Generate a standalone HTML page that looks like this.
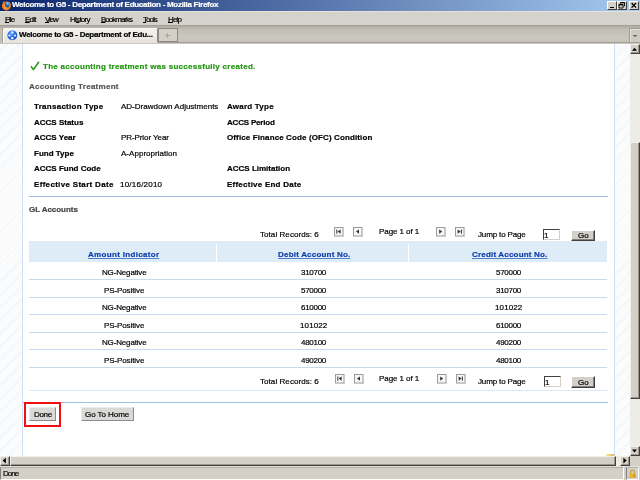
<!DOCTYPE html>
<html><head><meta charset="utf-8">
<style>
*{margin:0;padding:0;box-sizing:border-box}
html,body{width:640px;height:480px;overflow:hidden;background:#d4d0c8;font-family:"Liberation Sans",sans-serif}
.a{position:absolute}
.t{position:absolute;white-space:nowrap;line-height:10px;font-size:8px;color:#000;will-change:transform;-webkit-text-stroke:0.2px currentColor}
.b{font-weight:bold}
.u{text-decoration:underline;text-decoration-color:#5080cc;text-decoration-thickness:1px;text-underline-offset:1px}
.hatch{background:repeating-linear-gradient(-45deg,#ffffff 0px,#ffffff 1.3px,#f3f6f8 1.3px,#f3f6f8 2.3px)}
.wbtn{position:absolute;top:1px;width:10px;height:9px;background:#d4d0c8;border:1px solid;border-color:#fff #404040 #404040 #fff}
.pbtn{position:absolute;width:9px;height:9px;border:1px solid #b0b0b0;background:#f4f4f4}
.line{position:absolute;height:1px}
.sbtn{position:absolute;background:#d4d0c8;border:1px solid;border-color:#f2f0ea #404040 #404040 #f2f0ea;box-shadow:inset -1px -1px 0 #9a968e}
.gbtn{position:absolute;background:#d4d0c8;border:1px solid;border-color:#fff #404040 #404040 #fff;box-shadow:inset -1px -1px 0 #808080}

u{text-decoration:underline;text-decoration-thickness:1px;text-underline-offset:0px}

</style></head><body>
<!-- Title bar -->
<div class="a" style="left:0;top:0;width:640px;height:11px;background:linear-gradient(to right,#0a246a 0%,#a6caf0 100%)"></div>
<svg class="a" style="left:1px;top:0px" width="11" height="11" viewBox="0 0 11 11">
<defs><radialGradient id="fx" cx="0.45" cy="0.6" r="0.6"><stop offset="0" stop-color="#ffb030"/><stop offset="0.65" stop-color="#f07818"/><stop offset="1" stop-color="#c04a10"/></radialGradient>
<radialGradient id="gl" cx="0.55" cy="0.25" r="0.8"><stop offset="0" stop-color="#8ad8ff"/><stop offset="0.5" stop-color="#2a70c8"/><stop offset="1" stop-color="#143a88"/></radialGradient></defs>
<circle cx="5.4" cy="5.8" r="4.6" fill="url(#fx)"/>
<ellipse cx="6.4" cy="4.6" rx="2.4" ry="2.9" fill="url(#gl)"/>
<path d="M8.6 2.6 Q9.6 4.6 8.6 7" stroke="#f5a030" stroke-width="0.9" fill="none"/>
<path d="M1.6 1.2 L2.6 3.6 L4.4 2.4 Z" fill="#f08a20"/>
</svg>
<div class="wbtn" style="left:607px"></div>
<div class="wbtn" style="left:617px"></div>
<div class="wbtn" style="left:629px"></div>
<div class="a" style="left:610px;top:7px;width:4px;height:1px;background:#000"></div>
<svg class="a" style="left:617px;top:1px" width="10" height="9" viewBox="0 0 10 9"><path d="M3.5 1.5h4v3.5h-1M3.5 1.5v1.2M2 3.5h4v3.5h-4z M2 3.5v1" fill="none" stroke="#000" stroke-width="0.9"/><path d="M3.5 1.6h4" stroke="#000" stroke-width="1.3"/><path d="M2 3.7h4" stroke="#000" stroke-width="1.3"/></svg>
<svg class="a" style="left:629px;top:1px" width="10" height="9" viewBox="0 0 10 9"><path d="M2.6 2 L7 6.6 M7 2 L2.6 6.6" stroke="#000" stroke-width="1.3"/></svg>
<!-- Menu -->
<div class="a" style="left:0;top:11px;width:640px;height:15px;background:#d4d2ca;border-top:1px solid #e4e2dc"></div>
<!-- Tabs -->
<div class="a" style="left:0;top:25px;width:640px;height:19px;background:linear-gradient(#a29e96 0px,#a29e96 1px,#b4afa9 1px,#b8b2ac 3px,#c0bdb5 4px,#c4c1b9 8px,#c9c6be 10px,#c9c6be 16px,#c2bcb4 17px,#a29e98 17px,#a29e98 18px,#cac8c4 18px)"></div>
<div class="a" style="left:0;top:28px;width:3px;height:15px;background:#c4c0b8;border-right:1px solid #a8a49c"></div>
<div class="a" style="left:3px;top:28px;width:155px;height:15px;background:linear-gradient(#f4f3ef,#e6e3dc);border:1px solid;border-color:#fbfaf8 #8c8880 #e6e3dc #fbfaf8;border-radius:2px 2px 0 0"></div>
<svg class="a" style="left:7px;top:30px" width="11" height="11" viewBox="0 0 11 11">
<defs><radialGradient id="tb" cx="0.4" cy="0.35" r="0.7"><stop offset="0" stop-color="#5aa0ff"/><stop offset="0.7" stop-color="#1d5fe0"/><stop offset="1" stop-color="#0d3aa8"/></radialGradient></defs>
<circle cx="5.3" cy="5.3" r="4.9" fill="url(#tb)"/>
<circle cx="5.3" cy="2.4" r="1.2" fill="#f4f6ff"/><circle cx="2.5" cy="5.6" r="1.1" fill="#e8eeff"/><circle cx="8.1" cy="5.6" r="1.1" fill="#e8eeff"/><circle cx="5.3" cy="8.3" r="1.2" fill="#f4f6ff"/>
</svg>
<div class="a" style="left:158px;top:28px;width:20px;height:14px;border:1px solid #8c8880;background:#d4d0c8"></div>
<div class="a" style="left:165px;top:35px;width:5px;height:1px;background:#aaa69e"></div>
<div class="a" style="left:167px;top:33px;width:1px;height:5px;background:#aaa69e"></div>
<div class="a" style="left:629px;top:28px;width:11px;height:14px;border-left:1px solid #a09c94;border-top:1px solid #a09c94;background:#cdcac2;box-shadow:inset 1px 1px 0 #e4e2dc"></div>
<div class="a" style="left:633px;top:35px;width:4px;height:1px;background:#6a665e"></div>
<div class="a" style="left:634px;top:36px;width:2px;height:1px;background:#8a867e"></div>
<!-- Content -->
<div class="a" style="left:0;top:44px;width:630px;height:412px;background:#fff"></div>
<div class="a hatch" style="left:0;top:44px;width:22px;height:412px"></div>
<div class="a" style="left:22px;top:44px;width:1px;height:412px;background:#cfdff5"></div>
<div class="a hatch" style="left:615px;top:44px;width:15px;height:412px"></div>
<div class="a" style="left:614px;top:44px;width:1px;height:412px;background:#cfdff5"></div>
<svg class="a" style="left:30px;top:61px" width="10" height="10" viewBox="0 0 10 10"><path d="M1.3 5.8 L3.4 8.6 L8.6 1.2" fill="none" stroke="#1f9610" stroke-width="1.5" stroke-linecap="round" stroke-linejoin="round"/></svg>
<div class="line" style="left:29px;top:196px;width:579px;background:#9ec0e8"></div>
<!-- pager top -->
<svg class="a" style="left:334px;top:227px" width="10" height="10" viewBox="0 0 10 10"><rect x="0.5" y="0.5" width="8.5" height="8.5" fill="#f7f7f7" stroke="#9a9a9a" stroke-width="1"/><path d="M1 9.5 H9.5 V1" stroke="#c8c8c8" stroke-width="1" fill="none"/><rect x="2.3" y="2.5" width="1" height="4.2" fill="#333"/><path d="M6.6 2.4 L3.6 4.6 L6.6 6.8Z" fill="#333"/></svg><svg class="a" style="left:353px;top:227px" width="10" height="10" viewBox="0 0 10 10"><rect x="0.5" y="0.5" width="8.5" height="8.5" fill="#f7f7f7" stroke="#9a9a9a" stroke-width="1"/><path d="M1 9.5 H9.5 V1" stroke="#c8c8c8" stroke-width="1" fill="none"/><path d="M6 2.4 L3 4.6 L6 6.8Z" fill="#333"/></svg><svg class="a" style="left:436px;top:227px" width="10" height="10" viewBox="0 0 10 10"><rect x="0.5" y="0.5" width="8.5" height="8.5" fill="#f7f7f7" stroke="#9a9a9a" stroke-width="1"/><path d="M1 9.5 H9.5 V1" stroke="#c8c8c8" stroke-width="1" fill="none"/><path d="M3.2 2.4 L6.2 4.6 L3.2 6.8Z" fill="#333"/></svg><svg class="a" style="left:455px;top:227px" width="10" height="10" viewBox="0 0 10 10"><rect x="0.5" y="0.5" width="8.5" height="8.5" fill="#f7f7f7" stroke="#9a9a9a" stroke-width="1"/><path d="M1 9.5 H9.5 V1" stroke="#c8c8c8" stroke-width="1" fill="none"/><path d="M2.6 2.4 L5.6 4.6 L2.6 6.8Z" fill="#333"/><rect x="5.9" y="2.5" width="1" height="4.2" fill="#333"/></svg>
<div class="a" style="left:543px;top:229px;width:17px;height:11px;border:1px solid;border-color:#404040 #d4d0c8 #d4d0c8 #404040;background:#fff"></div>
<div class="gbtn" style="left:571px;top:230px;width:24px;height:11px"></div>
<!-- table -->
<div class="a" style="left:29px;top:241px;width:578px;height:21px;background:#deecf8"></div>
<div class="a" style="left:216px;top:244px;width:1px;height:18px;background:#fff"></div>
<div class="a" style="left:408px;top:244px;width:1px;height:18px;background:#fff"></div>
<div class="line" style="left:29px;top:279px;width:578px;background:#c9daf0"></div>
<div class="line" style="left:29px;top:297px;width:578px;background:#c9daf0"></div>
<div class="line" style="left:29px;top:314px;width:578px;background:#c9daf0"></div>
<div class="line" style="left:29px;top:332px;width:578px;background:#c9daf0"></div>
<div class="line" style="left:29px;top:349px;width:578px;background:#c9daf0"></div>
<div class="line" style="left:29px;top:367px;width:578px;background:#c9daf0"></div>
<!-- pager bottom -->
<svg class="a" style="left:335px;top:374px" width="10" height="10" viewBox="0 0 10 10"><rect x="0.5" y="0.5" width="8.5" height="8.5" fill="#f7f7f7" stroke="#9a9a9a" stroke-width="1"/><path d="M1 9.5 H9.5 V1" stroke="#c8c8c8" stroke-width="1" fill="none"/><rect x="2.3" y="2.5" width="1" height="4.2" fill="#333"/><path d="M6.6 2.4 L3.6 4.6 L6.6 6.8Z" fill="#333"/></svg><svg class="a" style="left:354px;top:374px" width="10" height="10" viewBox="0 0 10 10"><rect x="0.5" y="0.5" width="8.5" height="8.5" fill="#f7f7f7" stroke="#9a9a9a" stroke-width="1"/><path d="M1 9.5 H9.5 V1" stroke="#c8c8c8" stroke-width="1" fill="none"/><path d="M6 2.4 L3 4.6 L6 6.8Z" fill="#333"/></svg><svg class="a" style="left:437px;top:374px" width="10" height="10" viewBox="0 0 10 10"><rect x="0.5" y="0.5" width="8.5" height="8.5" fill="#f7f7f7" stroke="#9a9a9a" stroke-width="1"/><path d="M1 9.5 H9.5 V1" stroke="#c8c8c8" stroke-width="1" fill="none"/><path d="M3.2 2.4 L6.2 4.6 L3.2 6.8Z" fill="#333"/></svg><svg class="a" style="left:456px;top:374px" width="10" height="10" viewBox="0 0 10 10"><rect x="0.5" y="0.5" width="8.5" height="8.5" fill="#f7f7f7" stroke="#9a9a9a" stroke-width="1"/><path d="M1 9.5 H9.5 V1" stroke="#c8c8c8" stroke-width="1" fill="none"/><path d="M2.6 2.4 L5.6 4.6 L2.6 6.8Z" fill="#333"/><rect x="5.9" y="2.5" width="1" height="4.2" fill="#333"/></svg>
<div class="a" style="left:544px;top:376px;width:17px;height:11px;border:1px solid;border-color:#404040 #d4d0c8 #d4d0c8 #404040;background:#fff"></div>
<div class="gbtn" style="left:571px;top:376px;width:24px;height:12px"></div>
<div class="line" style="left:29px;top:390px;width:579px;background:#dde8f5"></div>
<div class="line" style="left:23px;top:402px;width:585px;background:#9ec0e8"></div>
<!-- buttons -->
<div class="a" style="left:29px;top:407px;width:27px;height:14px;background:#d9d9d7;border:1px solid;border-color:#ececec #8c8c8c #8c8c8c #ececec"></div>
<div class="a" style="left:81px;top:407px;width:53px;height:14px;background:#d9d9d7;border:1px solid;border-color:#ececec #8c8c8c #8c8c8c #ececec"></div>
<!-- vertical scrollbar -->
<div class="a" style="left:630px;top:44px;width:10px;height:412px;background:#edece7"></div>
<div class="sbtn" style="left:630px;top:44px;width:10px;height:10px"></div>
<svg class="a" style="left:630px;top:44px" width="10" height="10"><path d="M2 6.8 L4.5 3.8 L7 6.8Z" fill="#000"/></svg>
<div class="sbtn" style="left:630px;top:142px;width:10px;height:257px"></div>
<div class="sbtn" style="left:630px;top:446px;width:10px;height:10px"></div>
<svg class="a" style="left:630px;top:446px" width="10" height="10"><path d="M2 3.5 L4.5 6.5 L7 3.5Z" fill="#000"/></svg>
<!-- horizontal scrollbar -->
<div class="a" style="left:0;top:456px;width:640px;height:10px;background:#edece7"></div>
<div class="sbtn" style="left:0;top:456px;width:10px;height:10px"></div>
<svg class="a" style="left:0;top:456px" width="10" height="10"><path d="M5.9 1.8 L2.6 4.6 L5.9 7.4Z" fill="#000"/></svg>
<div class="sbtn" style="left:10px;top:456px;width:606px;height:10px"></div>
<div class="sbtn" style="left:620px;top:456px;width:10px;height:10px"></div>
<svg class="a" style="left:620px;top:456px" width="10" height="10"><path d="M3.4 1.8 L6.7 4.6 L3.4 7.4Z" fill="#000"/></svg>
<div class="a" style="left:630px;top:456px;width:10px;height:10px;background:#d4d0c8"></div>
<!-- status -->
<div class="a" style="left:0;top:466px;width:640px;height:14px;background:#d4d0c8;border-top:1px solid #e4e1da"></div>
<div class="a" style="left:0;top:467px;width:624px;height:13px;border:1px solid;border-color:#b4b0a8 #fff #fff #808080"></div>
<div class="a" style="left:626px;top:467px;width:13px;height:13px;border:1px solid;border-color:#b4b0a8 #fff #fff #808080"></div>
<svg class="a" style="left:627px;top:468px" width="11" height="11" viewBox="0 0 11 11"><path d="M3.6 5.6 V4.2 A1.9 1.9 0 0 1 7.4 4.2 V5.6" fill="none" stroke="#c89a20" stroke-width="1.1"/><rect x="2.2" y="5.4" width="6.8" height="4.6" rx="0.5" fill="#e2b830"/><rect x="6.6" y="6.4" width="1.2" height="2.6" fill="#b88a18"/></svg>
<div class="a" style="left:606px;top:454px;width:8px;height:2px;background:linear-gradient(to right,rgba(230,180,40,0.3),#e8b830)"></div>
<div id="t0" class="t b" style="left:43.00px;top:62px;letter-spacing:0.286px;color:#229610">The accounting treatment was successfully created.</div>
<div id="t1" class="t b" style="left:29.00px;top:82px;letter-spacing:0.263px;color:#555">Accounting Treatment</div>
<div id="t2" class="t b" style="left:33.50px;top:102px;letter-spacing:0.267px;">Transaction Type</div>
<div id="t3" class="t " style="left:121.00px;top:102px;">AD-Drawdown Adjustments</div>
<div id="t4" class="t b" style="left:227.00px;top:102px;letter-spacing:0.222px;">Award Type</div>
<div id="t5" class="t b" style="left:33.50px;top:118px;">ACCS Status</div>
<div id="t6" class="t b" style="left:227.00px;top:118px;letter-spacing:-0.200px;">ACCS Period</div>
<div id="t7" class="t b" style="left:33.50px;top:133px;">ACCS Year</div>
<div id="t8" class="t " style="left:121.00px;top:133px;letter-spacing:-0.083px;">PR-Prior Year</div>
<div id="t9" class="t b" style="left:227.00px;top:133px;letter-spacing:0.118px;">Office Finance Code (OFC) Condition</div>
<div id="t10" class="t b" style="left:33.50px;top:149px;">Fund Type</div>
<div id="t11" class="t " style="left:121.00px;top:149px;letter-spacing:0.029px;">A-Appropriation</div>
<div id="t12" class="t b" style="left:33.50px;top:164px;">ACCS Fund Code</div>
<div id="t13" class="t b" style="left:227.00px;top:164px;">ACCS Limitation</div>
<div id="t14" class="t b" style="left:33.50px;top:180px;letter-spacing:0.316px;">Effective Start Date</div>
<div id="t15" class="t " style="left:120.20px;top:180px;letter-spacing:0.222px;">10/16/2010</div>
<div id="t16" class="t b" style="left:227.00px;top:180px;letter-spacing:0.235px;">Effective End Date</div>
<div id="t17" class="t b" style="left:29.00px;top:204.6px;letter-spacing:-0.050px;color:#444">GL Accounts</div>
<div id="t18" class="t " style="left:259.72px;top:230px;letter-spacing:0.067px;">Total Records: 6</div>
<div id="t19" class="t " style="left:379.00px;top:227px;letter-spacing:-0.080px;">Page 1 of 1</div>
<div id="t20" class="t " style="left:477.86px;top:230px;letter-spacing:-0.145px;">Jump to Page</div>
<div id="t21" class="t " style="left:544.20px;top:231px;">1</div>
<div id="t22" class="t " style="left:578.00px;top:231px;">Go</div>
<div id="t23" class="t b u" style="left:88.00px;top:250px;letter-spacing:0.320px;color:#0f3da8">Amount Indicator</div>
<div id="t24" class="t b u" style="left:278.00px;top:250px;letter-spacing:0.200px;color:#0f3da8">Debit Account No.</div>
<div id="t25" class="t b u" style="left:471.65px;top:250px;letter-spacing:0.188px;color:#0f3da8">Credit Account No.</div>
<div id="t26" class="t " style="left:101.50px;top:268.0px;letter-spacing:-0.160px;">NG-Negative</div>
<div id="t27" class="t " style="left:301.00px;top:268.0px;letter-spacing:-0.280px;">310700</div>
<div id="t28" class="t " style="left:496.00px;top:268.0px;letter-spacing:-0.280px;">570000</div>
<div id="t29" class="t " style="left:103.50px;top:285.5px;letter-spacing:-0.100px;">PS-Positive</div>
<div id="t30" class="t " style="left:301.00px;top:285.5px;letter-spacing:-0.280px;">570000</div>
<div id="t31" class="t " style="left:496.00px;top:285.5px;letter-spacing:-0.280px;">310700</div>
<div id="t32" class="t " style="left:101.50px;top:303.0px;letter-spacing:-0.160px;">NG-Negative</div>
<div id="t33" class="t " style="left:301.00px;top:303.0px;letter-spacing:-0.280px;">610000</div>
<div id="t34" class="t " style="left:495.20px;top:303.0px;letter-spacing:0.120px;">101022</div>
<div id="t35" class="t " style="left:103.50px;top:320.5px;letter-spacing:-0.100px;">PS-Positive</div>
<div id="t36" class="t " style="left:300.20px;top:320.5px;letter-spacing:0.120px;">101022</div>
<div id="t37" class="t " style="left:496.00px;top:320.5px;letter-spacing:-0.280px;">610000</div>
<div id="t38" class="t " style="left:101.50px;top:338.0px;letter-spacing:-0.160px;">NG-Negative</div>
<div id="t39" class="t " style="left:301.00px;top:338.0px;letter-spacing:-0.280px;">480100</div>
<div id="t40" class="t " style="left:496.00px;top:338.0px;letter-spacing:-0.280px;">490200</div>
<div id="t41" class="t " style="left:103.50px;top:355.5px;letter-spacing:-0.100px;">PS-Positive</div>
<div id="t42" class="t " style="left:301.00px;top:355.5px;letter-spacing:-0.280px;">490200</div>
<div id="t43" class="t " style="left:496.00px;top:355.5px;letter-spacing:-0.280px;">480100</div>
<div id="t44" class="t " style="left:260.14px;top:377px;letter-spacing:0.067px;">Total Records: 6</div>
<div id="t45" class="t " style="left:379.35px;top:374px;letter-spacing:-0.080px;">Page 1 of 1</div>
<div id="t46" class="t " style="left:478.36px;top:377px;letter-spacing:-0.145px;">Jump to Page</div>
<div id="t47" class="t " style="left:545.20px;top:378px;">1</div>
<div id="t48" class="t " style="left:578.00px;top:378px;">Go</div>
<div id="t49" class="t " style="left:33.50px;top:410px;letter-spacing:-0.333px;">Done</div>
<div id="t50" class="t " style="left:85.22px;top:410px;letter-spacing:-0.056px;">Go To Home</div>
<div id="t51" class="t b" style="left:12.00px;top:0px;letter-spacing:-0.286px;color:#fff">Welcome to G5 - Department of Education - Mozilla Firefox</div>
<div id="t52" class="t " style="left:4.86px;top:15px;letter-spacing:-0.933px;"><u>F</u>ile</div>
<div id="t53" class="t " style="left:24.86px;top:15px;letter-spacing:-0.733px;"><u>E</u>dit</div>
<div id="t54" class="t " style="left:45.28px;top:15px;letter-spacing:-1.133px;"><u>V</u>iew</div>
<div id="t55" class="t " style="left:69.50px;top:15px;letter-spacing:-0.733px;">Hi<u>s</u>tory</div>
<div id="t56" class="t " style="left:101.00px;top:15px;letter-spacing:-1.000px;"><u>B</u>ookmarks</div>
<div id="t57" class="t " style="left:143.00px;top:15px;letter-spacing:-1.000px;"><u>T</u>ools</div>
<div id="t58" class="t " style="left:168.00px;top:15px;letter-spacing:-0.867px;"><u>H</u>elp</div>
<div id="t59" class="t b" style="left:19.00px;top:30px;letter-spacing:-0.257px;">Welcome to G5 - Department of Edu...</div>
<div id="t60" class="t " style="left:3.35px;top:469px;letter-spacing:-1.000px;">Done</div>
<div class="a" style="left:24px;top:402px;width:37px;height:25px;border:2px solid #f01010"></div>

</body></html>
